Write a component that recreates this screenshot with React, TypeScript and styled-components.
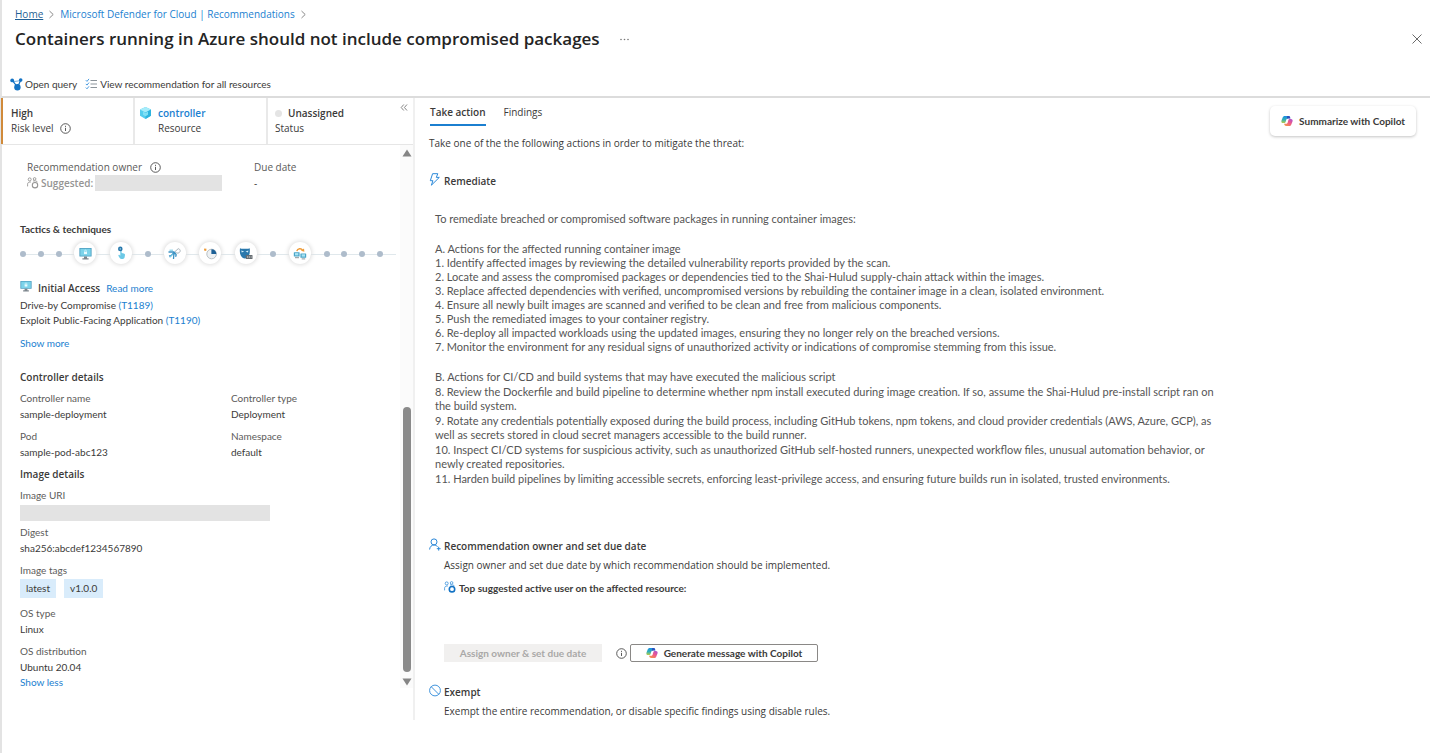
import React from 'react';
import styled, { createGlobalStyle } from 'styled-components';

const blue = '#1b7fd0';
const baseFont = "'Open Sans', 'Noto Sans', sans-serif";
const compactFont = "Lato, 'Open Sans', sans-serif";

const GlobalStyle = createGlobalStyle`
  * { box-sizing: border-box; }
  body {
    margin: 0;
    background: #fff;
    color: #3b3a39;
    font-family: ${baseFont};
    font-size: 10px;
    line-height: 16px;
  }
  h1, h2, h3, p, ol, dl, dd, dt { margin: 0; padding: 0; font-size: 10px; font-weight: 400; }
  button { font: inherit; color: inherit; cursor: pointer; }
  svg { display: block; flex: none; }
`;

const Page = styled.div`
  min-height: 100vh;
  border-left: 2px solid #e3e3e3;
  display: flex;
  flex-direction: column;
`;

const Header = styled.header`
  padding: 6px 0 4px 13px;
  border-bottom: 2px solid #dcdcdc;
`;

const Breadcrumb = styled.nav`
  display: flex;
  align-items: center;
  gap: 5px;
`;

const Link = styled.a<{ $underlined?: boolean; $strong?: boolean }>`
  color: ${(p) => (p.$underlined ? '#1f5f95' : blue)};
  text-decoration: ${(p) => (p.$underlined ? 'underline' : 'none')};
  font-weight: ${(p) => (p.$strong ? 600 : 400)};
`;

const ShowLess = styled(Link)`
  display: block;
  line-height: 12px;
`;

const TitleRow = styled.div`
  display: flex;
  align-items: center;
  gap: 20px;
  margin-top: 4px;
  padding-right: 8px;
`;

const Title = styled.h1`
  font-size: 17px;
  line-height: 26px;
  font-weight: 600;
  color: #242424;
`;

const PlainButton = styled.button`
  display: flex;
  align-items: center;
  gap: 2px;
  padding: 0;
  border: 0;
  background: none;
`;

const CloseButton = styled(PlainButton)`
  margin-left: auto;
`;

const Toolbar = styled.div`
  display: flex;
  gap: 8px;
  margin: 24px 0 0 -5px;
  font-family: ${compactFont};
`;

const Body = styled.div`
  display: flex;
  align-items: flex-start;
`;

const Side = styled.aside`
  flex: 0 0 413px;
  border-right: 2px solid #f0f0f0;
  padding-bottom: 32px;
`;

const Summary = styled.div`
  display: flex;
  border-bottom: 1px solid #e6e6e6;
`;

const SummaryCell = styled.div<{ $width?: number; $risk?: boolean }>`
  position: relative;
  flex: ${(p) => (p.$width ? `0 0 ${p.$width}px` : '1')};
  display: flex;
  gap: 6px;
  padding: 8px 0 8px ${(p) => (p.$risk ? 8 : p.$width ? 4 : 7)}px;
  border-left: ${(p) => (p.$risk ? '2px solid #d08a3a' : '2px solid #e9e9e9')};
  margin-left: ${(p) => (p.$risk ? '-1px' : '0')};
  line-height: 15px;
`;

const Inline = styled.div`
  display: flex;
  align-items: center;
  gap: 6px;
`;

const Strong = styled.span`
  font-weight: 600;
`;

const StatusDot = styled.span`
  width: 7px;
  height: 7px;
  border-radius: 50%;
  background: #e4e4e4;
`;

const CollapseButton = styled.button`
  position: absolute;
  top: 5px;
  right: 5px;
  padding: 0;
  border: 0;
  background: none;
`;

const SideScroll = styled.div`
  display: flex;
`;

const SideContent = styled.div`
  flex: 1;
  padding: 14px 4px 0 18px;
  font-family: ${compactFont};
`;

const Scrollbar = styled.div`
  flex: 0 0 13px;
  display: flex;
  flex-direction: column;
  align-items: center;
  justify-content: space-between;
  padding: 4px 0 2px;
  background: #fbfbfb;
`;

const ScrollThumb = styled.div`
  width: 8px;
  height: 265px;
  margin: auto 0 6px;
  border-radius: 4px;
  background: #8a8a8a;
`;

const Fields = styled.dl<{ $first: number }>`
  display: grid;
  grid-template-columns: ${(p) => p.$first}px 1fr;
  row-gap: 5px;
`;

const OwnerFields = styled(Fields)`
  padding-left: 7px;
  font-family: ${baseFont};
`;

const Field = styled.div<{ $wide?: boolean }>`
  grid-column: ${(p) => (p.$wide ? '1 / -1' : 'auto')};
`;

const Label = styled.dt`
  display: flex;
  align-items: center;
  gap: 8px;
  color: #5c5b5a;
`;

const Value = styled.dd`
  display: flex;
  align-items: center;
  line-height: 17px;
`;

const OwnerValue = styled(Value)<{ $muted?: boolean }>`
  gap: 2px;
  line-height: 16px;
  font-weight: ${(p) => (p.$muted ? 600 : 400)};
  color: ${(p) => (p.$muted ? '#959493' : 'inherit')};
`;

const Redacted = styled.span<{ $width: number }>`
  width: ${(p) => p.$width}px;
  height: 16px;
  background: #e3e3e3;
`;

const RedactedValue = styled(Value)`
  padding-top: 2px;
  margin-bottom: -2px;
`;

const SideHeading = styled.h2<{ $top: number }>`
  margin-top: ${(p) => p.$top}px;
  font-family: ${baseFont};
  font-weight: 600;
  margin-bottom: 5px;
`;

const CompactHeading = styled(SideHeading)`
  font-family: ${compactFont};
  font-weight: 700;
`;

const Timeline = styled.div`
  position: relative;
  display: flex;
  align-items: center;
  height: 24px;
  margin: -1px 0 0 -6px;
  padding-right: 7px;

  &::before {
    content: '';
    position: absolute;
    left: 9px;
    right: 0;
    top: 13px;
    height: 1px;
    background: #e0e8ec;
  }
`;

const Slot = styled.div<{ $units: number }>`
  position: relative;
  flex: ${(p) => p.$units} 1 0;
  display: flex;
  justify-content: center;
`;

const Dot = styled.span`
  width: 6px;
  height: 6px;
  margin-top: 2px;
  border-radius: 50%;
  background: #aebccb;
`;

const Bubble = styled.span`
  width: 22px;
  height: 22px;
  display: flex;
  align-items: center;
  justify-content: center;
  border-radius: 50%;
  background: #fff;
  box-shadow: 0 0 4px 1px #dedede;
`;

const Tactic = styled.div`
  margin-top: 15px;
  margin-bottom: 2px;
  display: flex;
  align-items: center;
  gap: 6px;

  svg { margin-bottom: 4px; }
`;

const TacticName = styled(Strong)`
  font-family: ${baseFont};
`;

const Techniques = styled.div`
  line-height: 15px;
  margin-bottom: 7px;
`;

const Tags = styled.dd`
  display: flex;
  gap: 8px;
  padding: 1px 0 2px;
`;

const Tag = styled.span`
  padding: 0 6px;
  line-height: 19px;
  background: #d9ecfb;
`;

const Main = styled.main`
  flex: 1;
  display: flex;
  align-items: flex-start;
  padding: 6px 14px 0 14px;
`;

const Content = styled.div`
  flex: 1;
`;

const Tabs = styled.div`
  display: flex;
  gap: 18px;
  padding-left: 1px;
`;

const Tab = styled.button<{ $active?: boolean }>`
  padding: 0 0 4px;
  border: 0;
  border-bottom: 2px solid ${(p) => (p.$active ? blue : 'transparent')};
  background: none;
  font-weight: ${(p) => (p.$active ? 600 : 400)};
`;

const CopilotCard = styled.button`
  display: flex;
  align-items: center;
  gap: 6px;
  margin-top: 2px;
  padding: 0 11px;
  height: 30px;
  border: 0;
  border-radius: 5px;
  background: #fff;
  box-shadow: 0 1px 3px #c4c4c4;
  font-family: ${compactFont};
  font-weight: 700;
`;

const Lead = styled.p`
  margin-top: 9px;
`;

const SectionHeading = styled.h2<{ $top: number }>`
  display: flex;
  align-items: center;
  gap: 3px;
  margin-top: ${(p) => p.$top}px;
  font-weight: 600;

  svg { margin-bottom: 3px; }
`;

const Guide = styled.div`
  max-width: 796px;
  margin-top: 23px;
  padding-left: 6px;
  font-family: ${compactFont};
  color: #555;

  p, li { font-size: 11px; line-height: 14px; }
`;

const Steps = styled.ol<{ $gap: number }>`
  display: flex;
  flex-direction: column;
  gap: ${(p) => p.$gap}px;
  margin-top: 16px;
  list-style: none;
`;

const Indent = styled.div`
  padding-left: 15px;
`;

const Note = styled.p`
  margin-top: 3px;
`;

const Suggested = styled.h3`
  display: flex;
  align-items: center;
  gap: 3px;
  margin-top: 7px;
  font-family: ${compactFont};
  font-weight: 700;

  svg { margin-bottom: 2px; }
`;

const Actions = styled.div`
  display: flex;
  align-items: center;
  margin-top: 48px;
`;

const AssignButton = styled.button`
  width: 158px;
  height: 18px;
  margin-right: 14px;
  padding: 0;
  border: 0;
  background: #f1f0ef;
  font-family: ${compactFont};
  font-weight: 700;
  line-height: 18px;
  &:disabled { color: #a9a8a7; cursor: default; }
`;

const GenerateButton = styled.button`
  display: flex;
  align-items: center;
  justify-content: center;
  gap: 6px;
  width: 188px;
  height: 18px;
  margin-left: 3px;
  padding: 0;
  border: 1px solid #8a8886;
  border-radius: 2px;
  background: #fff;
  font-family: ${compactFont};
  font-weight: 700;
`;

const ChevronRight = () => (
  <svg width="7" height="9" viewBox="0 0 7 9" fill="none" stroke="#8a8a8a"><path d="M1.5 1l3.7 3.5L1.5 8" /></svg>
);

const InfoIcon = () => (
  <svg width="11" height="11" viewBox="0 0 11 11" fill="none" stroke="#4a4a4a" strokeWidth="0.9">
    <circle cx="5.5" cy="5.5" r="4.8" />
    <path d="M5.5 4.8v3.2M5.5 2.8v1.1" />
  </svg>
);

const QueryIcon = () => (
  <svg width="13" height="13" viewBox="0 0 13 13" fill="#1272c4">
    <path d="M2.5 2.6L7.6 9.4L10.6 2.2" fill="none" stroke="#1272c4" strokeWidth="1.2" />
    <path d="M3.500 3.600L10 2.700" stroke="#1272c4" strokeWidth=".6" />
    <circle cx="2.2" cy="2.4" r="1.9" />
    <circle cx="10.7" cy="2.1" r="1.8" />
    <circle cx="7.4" cy="9.3" r="3.2" />
  </svg>
);

const ChecklistIcon = () => (
  <svg width="13" height="12" viewBox="0 0 13 12" fill="none">
    <path d="M.8 2.2l1.2 1.2L4 .9M.8 5.9l1.2 1.2L4 4.6M.8 9.6l1.2 1.2L4 8.3" stroke="#4a9be0" />
    <path d="M5.5 2.5H12M5.5 6H12M5.5 9.5H12" stroke="#8b949b" />
  </svg>
);

const CubeIcon = () => (
  <svg width="13" height="14" viewBox="0 0 13 14">
    <path d="M6.5 1L12 3.6v6.2L6.5 13 1 9.8V3.6z" fill="#54cdee" />
    <path d="M6.5 1L12 3.6 6.5 6.6 1 3.6z" fill="#a6ecfa" />
    <path d="M6.5 6.6L12 3.6v6.2L6.5 13z" fill="#2fb4de" />
    <path d="M4 5.6l2.5 1.5L9 5.6v3.2l-2.500 1.400L4 8.800z" fill="#7fe0f5" />
  </svg>
);

const MonitorIcon = ({ size = 13 }: { size?: number }) => (
  <svg width={size} height={size} viewBox="0 0 13 13">
    <rect x=".4" y="1" width="12.200" height="8.600" rx=".5" fill="#4f9fc0" />
    <rect x="1.300" y="1.800" width="10.400" height="6.900" fill="#7cd3ea" />
    <path d="M5 9.600h3v1.600h1.600v1.200H3.400v-1.200H5z" fill="#7d868d" />
    <rect x="5" y="4.700" width="3" height="2.400" fill="#e9fbff" />
    <path d="M5.600 4.700v-.7a.9.9 0 0 1 1.800 0v.7" fill="none" stroke="#e9fbff" strokeWidth=".6" />
  </svg>
);

const TouchIcon = () => (
  <svg width="13" height="14" viewBox="0 0 13 14">
    <path d="M5.300 5c0-.9 1.300-.9 1.300 0v2l2.300.5c.8.2 1.200.8 1.100 1.600l-.4 2.200c-.2 1-.9 1.700-1.900 1.700H6.600c-.8 0-1.500-.3-1.900-1L3.500 10c-.5-.9.4-1.600 1.100-.9l.7.7z" fill="#6cc9e6" />
    <circle cx="5.300" cy="2.900" r="2.300" fill="#2878ac" />
    <circle cx="5.300" cy="2.900" r=".7" fill="#bfe6f5" />
  </svg>
);

const RoutesIcon = () => (
  <svg width="13" height="13" viewBox="0 0 13 13" fill="none" strokeWidth="1.300">
    <path d="M.5 5h6M6.500 5L3.200 8.600 1 9M6.800 5l-1 3-.3 4M6.500 5l1.700 2.800-.6 2" stroke="#3c93c4" />
    <path d="M1.500 3.200h3.500M4.800 6.800L2 10.600" stroke="#6cc9e6" strokeWidth="1" />
    <path d="M7 4.600l3.200-2.900c2.300.3 2.800 3 .6 4.100-1.300.7-2.400.2-3.200-.6" stroke="#a9b4bc" strokeWidth="1" />
  </svg>
);

const ClockIcon = () => (
  <svg width="14" height="13" viewBox="0 0 14 13">
    <circle cx="8.600" cy="7" r="4.800" fill="#eef1f3" stroke="#aab2b8" strokeWidth=".8" />
    <path d="M8.400 7V2.200a4.800 4.800 0 0 1 4.900 4.800z" fill="#1c6096" />
    <path d="M1.200 1.500l2.300.2-.3 2.200-2.200-.3z" fill="#ee9a36" />
  </svg>
);

const MaskIcon = () => (
  <svg width="14" height="13" viewBox="0 0 14 13">
    <path d="M1 1.200c1.800.9 3 .5 4.800.5s3 .4 4.900-.5c.4 3 .1 5.400-.8 7.400-1 2-2.600 2.900-4.100 2.900s-3-.9-4-2.900c-1-2-1.200-4.400-.8-7.400z" fill="#2a78ac" />
    <path d="M2.300 3.600l2.900 1-2.500.8zM9.400 3.600l-2.900 1 2.500.8z" fill="#d4effa" />
    <rect x="6.800" y="8" width="6.700" height="4" rx=".6" fill="#666d72" />
    <path d="M8 10h1.200M9.900 10h1.200M11.800 10h.8" stroke="#fff" strokeWidth=".8" />
  </svg>
);

const LateralIcon = () => (
  <svg width="14" height="13" viewBox="0 0 14 13">
    <path d="M3.800 4.200C4.500 1.300 8.300 1 9.600 3.300" fill="none" stroke="#ee9a36" strokeWidth="1.400" />
    <path d="M8 3.800l3.400 1L11 1.500z" fill="#ee9a36" />
    <rect x=".8" y="5.200" width="5.800" height="4.300" rx=".5" fill="#4aa5c8" />
    <rect x="2" y="6.100" width="3.300" height="2.300" fill="#a9e3f3" />
    <rect x="7.400" y="6.400" width="5.800" height="4.300" rx=".5" fill="#4aa5c8" />
    <rect x="8.700" y="7.300" width="3.300" height="2.300" fill="#a9e3f3" />
    <path d="M2 10.700h4M8.700 11.900h3.500" stroke="#8b949b" />
  </svg>
);

const PeopleIcon = ({ color, fill }: { color: string; fill?: string }) => (
  <svg width="12" height="12" viewBox="0 0 12 12" fill="none" stroke={color} strokeWidth=".9">
    <circle cx="2.700" cy="2.400" r="1.500" />
    <circle cx="7.600" cy="1.900" r="1.300" />
    <path d="M.6 9.400V7.200c0-1.400 1-2.200 2.300-2.200h1M6 3.900h2.400c1 0 1.700.5 1.900 1.300" />
    <circle cx="8" cy="8.200" r="2.700" stroke={fill ?? color} strokeWidth={fill ? 1.600 : 1.100} />
  </svg>
);

const BoltIcon = () => (
  <svg width="12" height="13" viewBox="0 0 12 13" fill="none" stroke="#2b88d8" strokeWidth="1" strokeLinejoin="round">
    <path d="M3.600.7h5.200L7.300 4.400h3L2.400 12.200l1.500-4.500H1.300z" />
  </svg>
);

const PersonAddIcon = () => (
  <svg width="12" height="13" viewBox="0 0 12 13" fill="none" stroke="#2b88d8" strokeWidth="1">
    <circle cx="5" cy="3.900" r="3" />
    <path d="M.6 11.500C.8 8.800 2.500 7 5 7c1.500 0 2.700.6 3.500 1.700M9.700 8.800v3.800M7.800 10.700h3.800" />
  </svg>
);

const BlockIcon = () => (
  <svg width="12" height="13" viewBox="0 0 12 13" fill="none" stroke="#2b88d8" strokeWidth=".9">
    <circle cx="6" cy="6.500" r="5.400" />
    <path d="M2.200 2.700l7.600 7.600" />
  </svg>
);

const CopilotIcon = ({ id }: { id: string }) => (
  <svg width="12" height="12" viewBox="0 0 12 12">
    <defs>
      <linearGradient id={`${id}a`} x1="0.300" y1="0" x2="0.200" y2="1">
        <stop offset="0" stopColor="#1d8fe0" />
        <stop offset=".5" stopColor="#2fb0b8" />
        <stop offset="1" stopColor="#b9cc4a" />
      </linearGradient>
      <linearGradient id={`${id}b`} x1="1" y1="0" x2="0.200" y2="1">
        <stop offset="0" stopColor="#a64fd8" />
        <stop offset=".5" stopColor="#ee5a8a" />
        <stop offset="1" stopColor="#f5944a" />
      </linearGradient>
    </defs>
    <path d="M8.700 2.400C8.400 1.500 7.900 1.100 7 1.100H3.900c-1.100 0-1.800.5-2.200 1.500L.5 5.400C0 7 .7 8 2.100 8h1c.9 0 1.300-.4 1.600-1.200l.6-2.200c.3-.9.9-1.300 1.700-1.300h2z" fill={`url(#${id}a)`} />
    <path d="M6.200 1.100h1.300c.9 0 1.500.4 1.700 1.300l.3 1.200H7.200c-.8 0-1.200.3-1.500.8z" fill="#2a52be" />
    <path d="M3.300 9.600c.3.900.8 1.300 1.700 1.300h3.100c1.100 0 1.800-.5 2.200-1.500l1.200-2.800C12 5 11.300 4 9.900 4h-1c-.9 0-1.300.4-1.600 1.200l-.6 2.200c-.3.900-.9 1.300-1.700 1.300H3z" fill={`url(#${id}b)`} />
  </svg>
);

const timeline: (React.ComponentType | null)[] = [
  null, null, null, MonitorIcon, TouchIcon, null, RoutesIcon, ClockIcon, MaskIcon, null, LateralIcon, null, null, null, null,
];

const containerSteps = [
  'A. Actions for the affected running container image',
  '1. Identify affected images by reviewing the detailed vulnerability reports provided by the scan.',
  '2. Locate and assess the compromised packages or dependencies tied to the Shai-Hulud supply-chain attack within the images.',
  '3. Replace affected dependencies with verified, uncompromised versions by rebuilding the container image in a clean, isolated environment.',
  '4. Ensure all newly built images are scanned and verified to be clean and free from malicious components.',
  '5. Push the remediated images to your container registry.',
  '6. Re-deploy all impacted workloads using the updated images, ensuring they no longer rely on the breached versions.',
  '7. Monitor the environment for any residual signs of unauthorized activity or indications of compromise stemming from this issue.',
];

const buildSteps = [
  'B. Actions for CI/CD and build systems that may have executed the malicious script',
  '8. Review the Dockerfile and build pipeline to determine whether npm install executed during image creation. If so, assume the Shai-Hulud pre-install script ran on the build system.',
  '9. Rotate any credentials potentially exposed during the build process, including GitHub tokens, npm tokens, and cloud provider credentials (AWS, Azure, GCP), as well as secrets stored in cloud secret managers accessible to the build runner.',
  '10. Inspect CI/CD systems for suspicious activity, such as unauthorized GitHub self-hosted runners, unexpected workflow files, unusual automation behavior, or newly created repositories.',
  '11. Harden build pipelines by limiting accessible secrets, enforcing least-privilege access, and ensuring future builds run in isolated, trusted environments.',
];

const TextField = ({ label, value, wide }: { label: string; value: string; wide?: boolean }) => (
  <Field $wide={wide}>
    <Label>{label}</Label>
    <Value>{value}</Value>
  </Field>
);

export default function App() {
  return (
    <Page>
      <GlobalStyle />
      <Header>
        <Breadcrumb aria-label="Breadcrumb">
          <Link href="#" $underlined>Home</Link>
          <ChevronRight />
          <Link href="#">Microsoft Defender for Cloud | Recommendations</Link>
          <ChevronRight />
        </Breadcrumb>
        <TitleRow>
          <Title>Containers running in Azure should not include compromised packages</Title>
          <PlainButton aria-label="More options">
            <svg width="9" height="3" viewBox="0 0 9 3" fill="#777"><circle cx="1" cy="1.500" r=".8" /><circle cx="4.500" cy="1.500" r=".8" /><circle cx="8" cy="1.500" r=".8" /></svg>
          </PlainButton>
          <CloseButton aria-label="Close">
            <svg width="10" height="10" viewBox="0 0 10 10" stroke="#6a6a6a"><path d="M.5.5l9 9M9.500.5l-9 9" /></svg>
          </CloseButton>
        </TitleRow>
        <Toolbar>
          <PlainButton><QueryIcon />Open query</PlainButton>
          <PlainButton><ChecklistIcon />View recommendation for all resources</PlainButton>
        </Toolbar>
      </Header>

      <Body>
        <Side>
          <Summary>
            <SummaryCell $width={132} $risk>
              <div>
                <Strong>High</Strong>
                <Inline>Risk level <InfoIcon /></Inline>
              </div>
            </SummaryCell>
            <SummaryCell $width={133}>
              <CubeIcon />
              <div>
                <Link href="#" $strong>controller</Link>
                <div>Resource</div>
              </div>
            </SummaryCell>
            <SummaryCell>
              <div>
                <Inline><StatusDot /><Strong>Unassigned</Strong></Inline>
                <div>Status</div>
              </div>
              <CollapseButton aria-label="Collapse panel">
                <svg width="8" height="9" viewBox="0 0 8 9" fill="none" stroke="#777" strokeWidth=".9"><path d="M3.800 1.500l-2.600 3 2.600 3M7 1.500l-2.600 3 2.600 3" /></svg>
              </CollapseButton>
            </SummaryCell>
          </Summary>

          <SideScroll>
            <SideContent>
              <OwnerFields $first={227}>
                <Field>
                  <Label>Recommendation owner <InfoIcon /></Label>
                  <OwnerValue $muted><PeopleIcon color="#959493" /><span>Suggested:</span><Redacted $width={127} /></OwnerValue>
                </Field>
                <Field>
                  <Label>Due date</Label>
                  <OwnerValue>-</OwnerValue>
                </Field>
              </OwnerFields>

              <CompactHeading $top={30}>Tactics &amp; techniques</CompactHeading>
              <Timeline>
                {timeline.map((Icon, i) => (
                  <Slot key={i} $units={Icon ? 2 : 1}>{Icon ? <Bubble><Icon /></Bubble> : <Dot />}</Slot>
                ))}
              </Timeline>

              <Tactic>
                <MonitorIcon size={12} />
                <TacticName>Initial Access</TacticName>
                <Link href="#">Read more</Link>
              </Tactic>
              <Techniques>
                <div>Drive-by Compromise <Link href="#">(T1189)</Link></div>
                <div>Exploit Public-Facing Application <Link href="#">(T1190)</Link></div>
              </Techniques>
              <Link href="#">Show more</Link>

              <SideHeading $top={18}>Controller details</SideHeading>
              <Fields $first={211}>
                <TextField label="Controller name" value="sample-deployment" />
                <TextField label="Controller type" value="Deployment" />
                <TextField label="Pod" value="sample-pod-abc123" />
                <TextField label="Namespace" value="default" />
              </Fields>

              <SideHeading $top={5}>Image details</SideHeading>
              <Fields $first={211}>
                <Field $wide>
                  <Label>Image URI</Label>
                  <RedactedValue><Redacted $width={250} /></RedactedValue>
                </Field>
                <TextField wide label="Digest" value="sha256:abcdef1234567890" />
                <Field $wide>
                  <Label>Image tags</Label>
                  <Tags><Tag>latest</Tag><Tag>v1.0.0</Tag></Tags>
                </Field>
                <TextField wide label="OS type" value="Linux" />
                <TextField wide label="OS distribution" value="Ubuntu 20.04" />
              </Fields>
              <ShowLess href="#">Show less</ShowLess>
            </SideContent>
            <Scrollbar aria-hidden="true">
              <svg width="10" height="8" viewBox="0 0 10 8" fill="#858585"><path d="M5 .5L9.500 7.500H.5z" /></svg>
              <ScrollThumb />
              <svg width="10" height="8" viewBox="0 0 10 8" fill="#858585"><path d="M5 7.500L9.500.5H.5z" /></svg>
            </Scrollbar>
          </SideScroll>
        </Side>

        <Main>
          <Content>
            <Tabs role="tablist">
              <Tab role="tab" aria-selected="true" $active>Take action</Tab>
              <Tab role="tab" aria-selected="false">Findings</Tab>
            </Tabs>
            <Lead>Take one of the the following actions in order to mitigate the threat:</Lead>

            <SectionHeading $top={22}><BoltIcon />Remediate</SectionHeading>
            <Guide>
              <p>To remediate breached or compromised software packages in running container images:</p>
              <Steps $gap={0}>{containerSteps.map((s) => <li key={s}>{s}</li>)}</Steps>
              <Steps $gap={1}>{buildSteps.map((s) => <li key={s}>{s}</li>)}</Steps>
            </Guide>

            <SectionHeading $top={52}><PersonAddIcon />Recommendation owner and set due date</SectionHeading>
            <Indent>
              <Note>Assign owner and set due date by which recommendation should be implemented.</Note>
              <Suggested><PeopleIcon color="#4a9be0" fill="#1272c4" />Top suggested active user on the affected resource:</Suggested>
              <Actions>
                <AssignButton disabled>Assign owner &amp; set due date</AssignButton>
                <InfoIcon />
                <GenerateButton><CopilotIcon id="generate" />Generate message with Copilot</GenerateButton>
              </Actions>
            </Indent>

            <SectionHeading $top={22}><BlockIcon />Exempt</SectionHeading>
            <Indent>
              <Note>Exempt the entire recommendation, or disable specific findings using disable rules.</Note>
            </Indent>
          </Content>
          <CopilotCard><CopilotIcon id="summarize" />Summarize with Copilot</CopilotCard>
        </Main>
      </Body>
    </Page>
  );
}
